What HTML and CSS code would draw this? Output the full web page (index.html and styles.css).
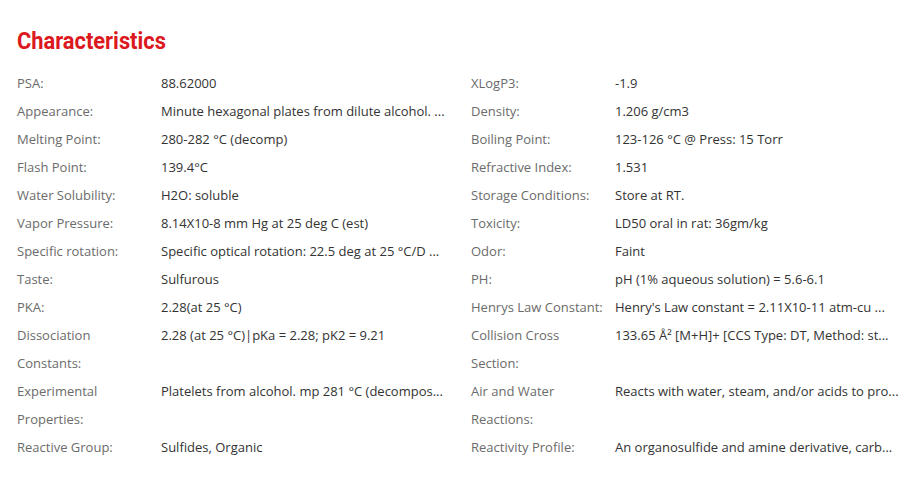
FILE: index.html
```html
<!DOCTYPE html>
<html lang="en">
<head>
    <meta charset="UTF-8">
    <title>Characteristics</title>
    <link rel="stylesheet" href="styles.css">
</head>
<body>
    <div class="container">
        <h2 class="section-title">Characteristics</h2>

        <div class="props-grid">
            <!-- left column -->
            <div class="props-col">
                <div class="prop-row"><div class="prop-label">PSA:</div><div class="prop-value">88.62000</div></div>
                <div class="prop-row"><div class="prop-label">Appearance:</div><div class="prop-value">Minute hexagonal plates from dilute alcohol. ...</div></div>
                <div class="prop-row"><div class="prop-label">Melting Point:</div><div class="prop-value">280-282 °C (decomp)</div></div>
                <div class="prop-row"><div class="prop-label">Flash Point:</div><div class="prop-value">139.4°C</div></div>
                <div class="prop-row"><div class="prop-label">Water Solubility:</div><div class="prop-value">H2O: soluble</div></div>
                <div class="prop-row"><div class="prop-label">Vapor Pressure:</div><div class="prop-value">8.14X10-8 mm Hg at 25 deg C (est)</div></div>
                <div class="prop-row"><div class="prop-label">Specific rotation:</div><div class="prop-value">Specific optical rotation: 22.5 deg at 25 °C/D ...</div></div>
                <div class="prop-row"><div class="prop-label">Taste:</div><div class="prop-value">Sulfurous</div></div>
                <div class="prop-row"><div class="prop-label">PKA:</div><div class="prop-value">2.28(at 25 °C)</div></div>
                <div class="prop-row"><div class="prop-label">Dissociation Constants:</div><div class="prop-value">2.28 (at 25 °C)|pKa = 2.28; pK2 = 9.21</div></div>
                <div class="prop-row"><div class="prop-label">Experimental Properties:</div><div class="prop-value">Platelets from alcohol. mp 281 °C (decompos...</div></div>
                <div class="prop-row"><div class="prop-label">Reactive Group:</div><div class="prop-value">Sulfides, Organic</div></div>
            </div>

            <!-- right column -->
            <div class="props-col">
                <div class="prop-row"><div class="prop-label">XLogP3:</div><div class="prop-value">-1.9</div></div>
                <div class="prop-row"><div class="prop-label">Density:</div><div class="prop-value">1.206 g/cm3</div></div>
                <div class="prop-row"><div class="prop-label">Boiling Point:</div><div class="prop-value">123-126 °C @ Press: 15 Torr</div></div>
                <div class="prop-row"><div class="prop-label">Refractive Index:</div><div class="prop-value">1.531</div></div>
                <div class="prop-row"><div class="prop-label">Storage Conditions:</div><div class="prop-value">Store at RT.</div></div>
                <div class="prop-row"><div class="prop-label">Toxicity:</div><div class="prop-value">LD50 oral in rat: 36gm/kg</div></div>
                <div class="prop-row"><div class="prop-label">Odor:</div><div class="prop-value">Faint</div></div>
                <div class="prop-row"><div class="prop-label">PH:</div><div class="prop-value">pH (1% aqueous solution) = 5.6-6.1</div></div>
                <div class="prop-row"><div class="prop-label">Henrys Law Constant:</div><div class="prop-value">Henry's Law constant = 2.11X10-11 atm-cu ...</div></div>
                <div class="prop-row"><div class="prop-label">Collision Cross Section:</div><div class="prop-value">133.65 Å² [M+H]+ [CCS Type: DT, Method: st...</div></div>
                <div class="prop-row"><div class="prop-label">Air and Water Reactions:</div><div class="prop-value">Reacts with water, steam, and/or acids to pro...</div></div>
                <div class="prop-row"><div class="prop-label">Reactivity Profile:</div><div class="prop-value">An organosulfide and amine derivative, carb...</div></div>
            </div>
        </div>
    </div>
</body>
</html>
```

FILE: styles.css
```css
body {
    margin: 0;
    padding: 0;
    font-family: "Segoe UI", "Open Sans", "Noto Sans", sans-serif;
    background: #fff;
}

.container {
    padding: 25px 17px 0 17px;
}

.section-title {
    margin: 0 0 12px 0;
    font-family: "Roboto", sans-serif;
    font-size: 24px;
    font-weight: 700;
    color: #dc1820;
    line-height: 32px;
    display: inline-block;
    transform: scaleX(0.91);
    transform-origin: left center;
}

.props-grid {
    display: grid;
    grid-template-columns: 454px 1fr;
}

.prop-row {
    display: grid;
    grid-template-columns: 144px 1fr;
    font-size: 13px;
    line-height: 28px;
}

.prop-label {
    color: #6b6b6b;
    padding-right: 8px;
}

.prop-value {
    color: #333;
    white-space: nowrap;
}
```
